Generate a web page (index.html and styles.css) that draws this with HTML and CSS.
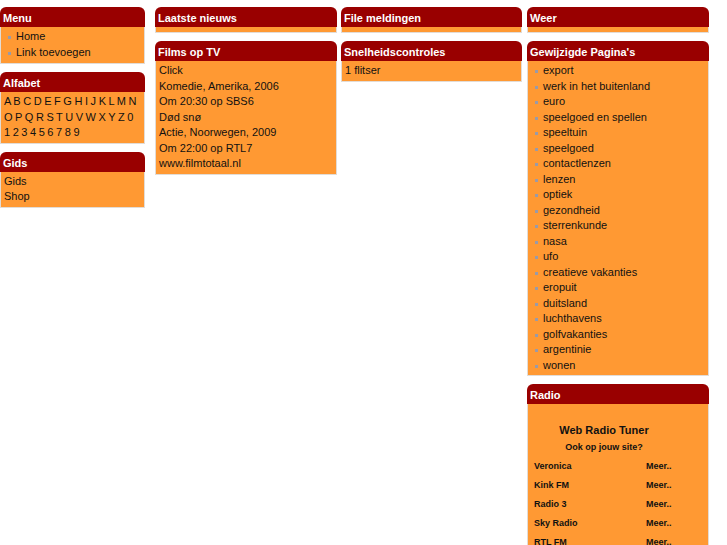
FILE: index.html
```html
<!doctype HTML>
<html>
	<head>
		<meta charset="utf-8"/>
		<title>Startpagina</title>
		<link rel="stylesheet" href="styles.css">
	</head>

	<body>
		<div class='page'>
			<div class='col col1'>
				<div class='box'>
					<div class='kop'>Menu</div>
					<ul class='inhoud lijst'>
						<li>Home</li>
						<li>Link toevoegen</li>
					</ul>
				</div>
				<div class='box'>
					<div class='kop'>Alfabet</div>
					<div class='inhoud alfabet'>
						<div>A B C D E F G H I J K L M N</div>
						<div>O P Q R S T U V W X Y Z 0</div>
						<div>1 2 3 4 5 6 7 8 9</div>
					</div>
				</div>
				<div class='box'>
					<div class='kop'>Gids</div>
					<div class='inhoud'>
						Gids<br>
						Shop
					</div>
				</div>
			</div>

			<div class='col col2'>
				<div class='box'>
					<div class='kop'>Laatste nieuws</div>
					<div class='inhoud leeg'></div>
				</div>
				<div class='box'>
					<div class='kop'>Films op TV</div>
					<div class='inhoud'>
						Click<br>
						Komedie, Amerika, 2006<br>
						Om 20:30 op SBS6<br>
						Død snø<br>
						Actie, Noorwegen, 2009<br>
						Om 22:00 op RTL7<br>
						www.filmtotaal.nl
					</div>
				</div>
			</div>

			<div class='col col3'>
				<div class='box'>
					<div class='kop'>File meldingen</div>
					<div class='inhoud leeg'></div>
				</div>
				<div class='box'>
					<div class='kop'>Snelheidscontroles</div>
					<div class='inhoud'>1 flitser</div>
				</div>
			</div>

			<div class='col col4'>
				<div class='box'>
					<div class='kop'>Weer</div>
					<div class='inhoud leeg'></div>
				</div>
				<div class='box'>
					<div class='kop'>Gewijzigde Pagina's</div>
					<ul class='inhoud lijst'>
						<li>export</li>
						<li>werk in het buitenland</li>
						<li>euro</li>
						<li>speelgoed en spellen</li>
						<li>speeltuin</li>
						<li>speelgoed</li>
						<li>contactlenzen</li>
						<li>lenzen</li>
						<li>optiek</li>
						<li>gezondheid</li>
						<li>sterrenkunde</li>
						<li>nasa</li>
						<li>ufo</li>
						<li>creatieve vakanties</li>
						<li>eropuit</li>
						<li>duitsland</li>
						<li>luchthavens</li>
						<li>golfvakanties</li>
						<li>argentinie</li>
						<li>wonen</li>
					</ul>
				</div>
				<div class='box'>
					<div class='kop'>Radio</div>
					<div class='inhoud radio'>
						<div class='tuner'>
							<div class='tunerTitel'>Web Radio Tuner</div>
							<div class='tunerSub'>Ook op jouw site?</div>
							<table class='zenders'>
								<tr><td>Veronica</td><td>Meer..</td></tr>
								<tr><td>Kink FM</td><td>Meer..</td></tr>
								<tr><td>Radio 3</td><td>Meer..</td></tr>
								<tr><td>Sky Radio</td><td>Meer..</td></tr>
								<tr><td>RTL FM</td><td>Meer..</td></tr>
							</table>
						</div>
					</div>
				</div>
			</div>
		</div>
	</body>
</html>
```

FILE: styles.css
```css
html, body {
	overflow: hidden;
	width: 100%;
	height: 100%;
}
body {
	background-color: white;
	margin: 0px;
}
body * {
	box-sizing: border-box;
	font-family: "Liberation Sans", Arial, Helvetica, sans-serif;
}

.page {
	display: flex;
	align-items: flex-start;
	padding-top: 7px;
}

.col1 {
	width: 145px;
}
.col2 {
	width: 182px;
	margin-left: 10px;
}
.col3 {
	width: 181px;
	margin-left: 4px;
}
.col4 {
	width: 182px;
	margin-left: 5px;
}

.box {
	margin-bottom: 8px;
}

.kop {
	height: 20px;
	line-height: 22px;
	padding-left: 3px;
	background-color: #990000;
	border-radius: 6px 6px 0 0;
	color: white;
	font-size: 11px;
	font-weight: bold;
}

.inhoud {
	margin: 0;
	padding: 2px 3px 2px 3px;
	background-color: #FF9933;
	border: 1px solid #e2dcd6;
	border-top: none;
	color: #111;
	font-size: 11px;
	line-height: 15.5px;
}

.inhoud.leeg {
	height: 6px;
	padding: 0;
}

.alfabet div {
	white-space: nowrap;
	word-spacing: -0.5px;
}

ul.lijst {
	list-style: none;
	padding-left: 15px;
}

ul.lijst li {
	position: relative;
}

ul.lijst li::before {
	content: '';
	position: absolute;
	left: -8px;
	top: 7px;
	width: 3px;
	height: 3px;
	background-color: #9a9aa8;
}

.col1 ul.lijst {
	padding-top: 2px;
	padding-bottom: 3px;
}

.inhoud.radio {
	padding: 0;
	height: 160px;
}

.tuner {
	width: 152px;
	padding-top: 19px;
	text-align: center;
	font-weight: bold;
}

.tunerTitel {
	font-size: 11px;
	font-weight: bold;
	line-height: 14px;
}

.tunerSub {
	font-size: 9px;
	font-weight: bold;
	line-height: 12px;
	margin-top: 4px;
}

table.zenders {
	width: 152px;
	border-collapse: collapse;
	margin-top: 4px;
}

table.zenders td {
	height: 19px;
	padding: 0 0 0 6px;
	font-size: 9px;
	font-weight: bold;
	text-align: left;
	line-height: 19px;
}

table.zenders td:first-child {
	width: 112px;
}
```
